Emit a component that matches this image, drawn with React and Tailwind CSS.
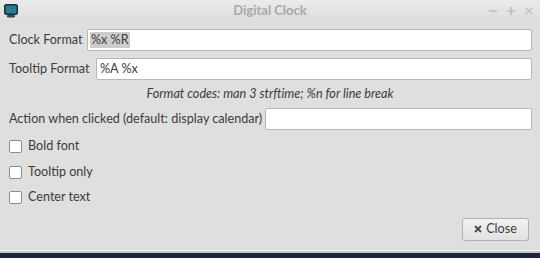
import React from "react";

const font = { fontFamily: 'Lato, "Open Sans", sans-serif' };

function Check({ label }) {
  return (
    <div className="flex items-center h-[25.5px] pl-[9px]">
      <span className="w-[13px] h-[13px] shrink-0 border border-[#8c8c8c] bg-white rounded-[2px] box-border" />
      <span className="ml-[6px] text-[#3c3c3c] whitespace-nowrap">{label}</span>
    </div>
  );
}

export default function App() {
  return (
    <div className="w-[540px] h-[258px] bg-[#dfdfdf] flex flex-col overflow-hidden text-[12.6px] leading-none" style={font}>
      {/* Title bar */}
      <div className="h-[22px] shrink-0 bg-gradient-to-b from-[#ebebeb] to-[#dcdcdc] flex items-center relative">
        <svg className="ml-[4px]" width="14" height="14" viewBox="0 0 14 14">
          <rect x="0.5" y="0.5" width="13" height="10" rx="1.5" fill="#1e4f63" stroke="#1b3340" />
          <rect x="2" y="2" width="10" height="7" fill="#2a7c93" />
          <rect x="3" y="11" width="8" height="2.5" rx="1" fill="#2d4b5a" />
        </svg>
        <div className="absolute left-0 right-0 top-[4px] text-center text-[13px] font-bold text-[#a9a9a9] pointer-events-none">
          Digital Clock
        </div>
        <div className="ml-auto mr-[6px] flex items-center gap-[8px]">
          <svg width="10" height="10" viewBox="0 0 10 10"><path d="M1 5h8" stroke="#bdbdbd" strokeWidth="1.6" /></svg>
          <svg width="10" height="10" viewBox="0 0 10 10"><path d="M1 5h8M5 1v8" stroke="#bdbdbd" strokeWidth="1.6" /></svg>
          <svg width="10" height="10" viewBox="0 0 10 10"><path d="M1.5 1.5l7 7M8.5 1.5l-7 7" stroke="#c4c4c4" strokeWidth="1.6" /></svg>
        </div>
      </div>

      {/* Body */}
      <div className="flex-1 flex flex-col text-[#3c3c3c]">
        <div className="flex items-center pl-[9px] pr-[8px] mt-[7px]">
          <span className="w-[78px] shrink-0 whitespace-nowrap">Clock Format</span>
          <div className="flex-1 h-[22px] bg-white border border-[#b8b8b8] rounded-[2px] flex items-center pl-[2px]">
            <span className="bg-[#cdcdcd] px-[1px] py-[2px]">%x %R</span>
          </div>
        </div>
        <div className="flex items-center pl-[9px] pr-[8px] mt-[7px]">
          <span className="w-[87px] shrink-0 whitespace-nowrap">Tooltip Format</span>
          <div className="flex-1 h-[22px] bg-white border border-[#b8b8b8] rounded-[2px] flex items-center pl-[3px]">
            %A %x
          </div>
        </div>
        <div className="text-center italic mt-[6px] h-[16px] leading-[16px] whitespace-nowrap">
          Format codes: man 3 strftime; %n for line break
        </div>
        <div className="flex items-center pl-[9px] pr-[8px] mt-[6px]">
          <span className="w-[256px] shrink-0 whitespace-nowrap">Action when clicked (default: display calendar)</span>
          <div className="flex-1 h-[22px] bg-white border border-[#b8b8b8] rounded-[2px]" />
        </div>
        <div className="mt-[4px]">
          <Check label="Bold font" />
          <Check label="Tooltip only" />
          <Check label="Center text" />
        </div>
        <div className="flex justify-end pr-[11px] mt-[7px]">
          <button className="w-[67px] h-[23px] bg-gradient-to-b from-[#f2f2f2] to-[#e2e2e2] border border-[#b3b3b3] rounded-[3px] flex items-center justify-center gap-[4px] text-[#3c3c3c]">
            <svg width="8" height="8" viewBox="0 0 8 8"><path d="M1 1l6 6M7 1l-6 6" stroke="#4a4a4a" strokeWidth="1.8" /></svg>
            <span>Close</span>
          </button>
        </div>
      </div>

      {/* Bottom */}
      <div className="h-[1px] shrink-0 bg-[#f4f4f4]" />
      <div className="h-[2px] shrink-0 bg-[#c8c8c8]" />
      <div className="h-[5px] shrink-0 bg-[#1c2444]" />
    </div>
  );
}
